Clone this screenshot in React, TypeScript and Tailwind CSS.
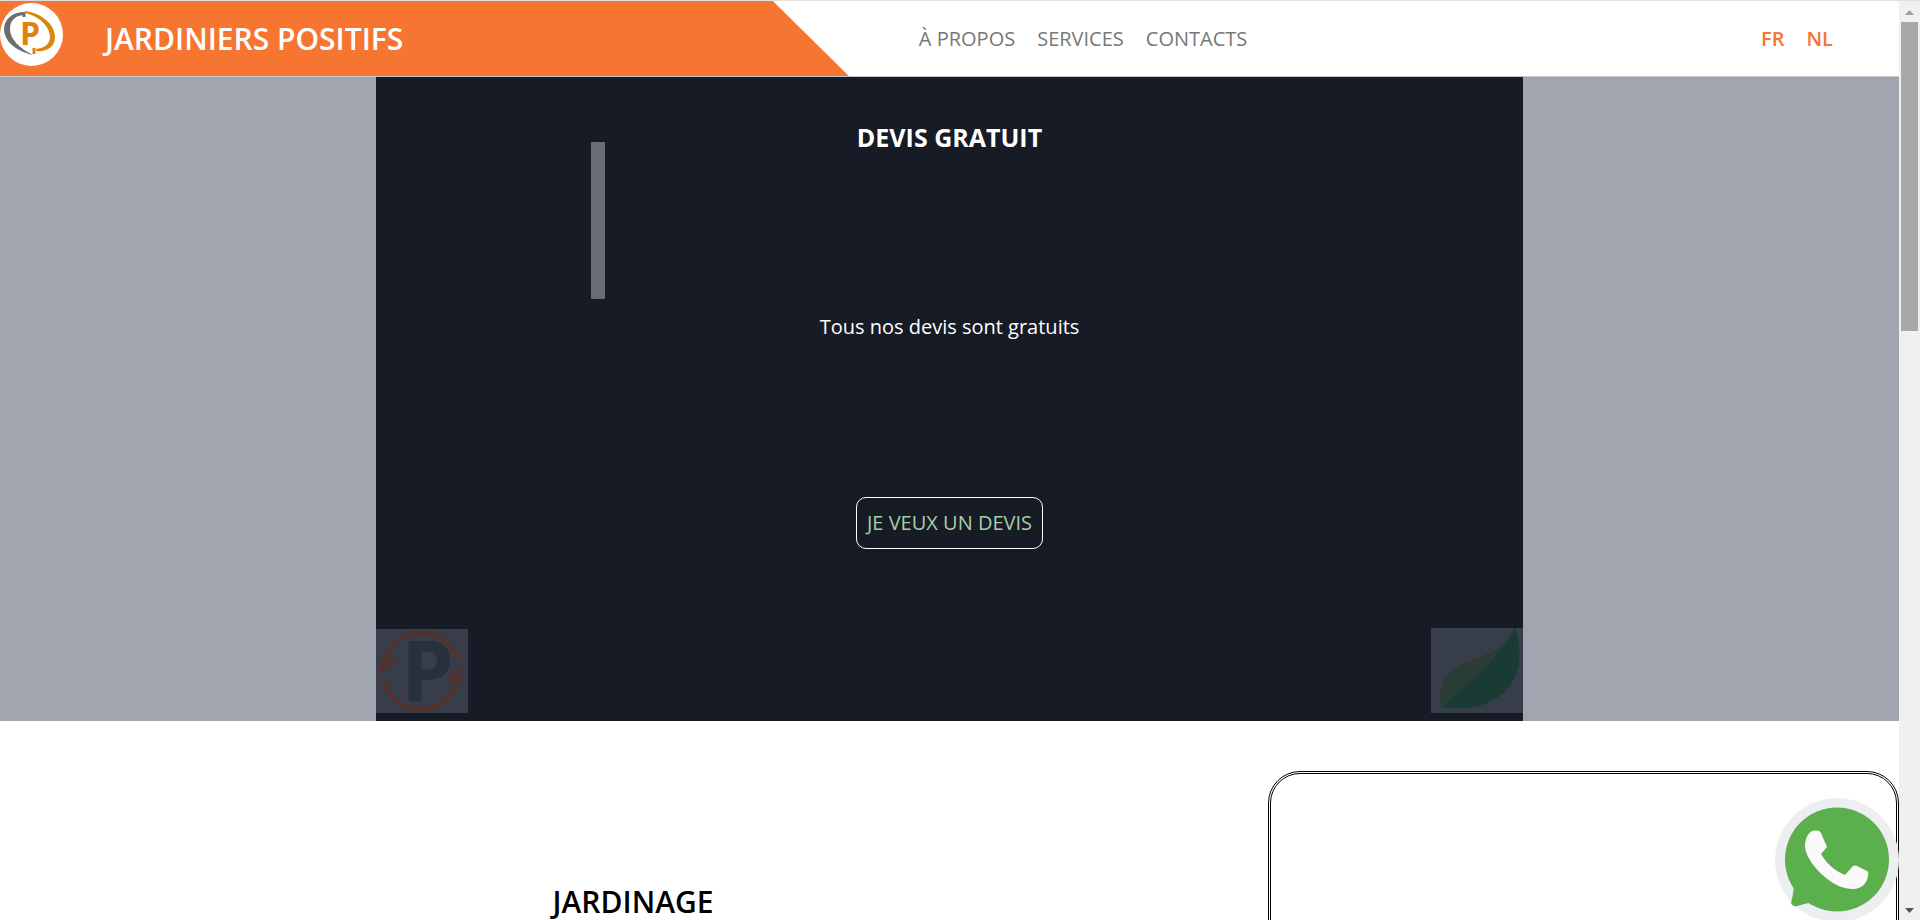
import React from 'react';

const navLinks = [
  { label: 'À PROPOS', href: '#a-propos' },
  { label: 'SERVICES', href: '#services' },
  { label: 'CONTACTS', href: '#contacts' },
];

function Logo() {
  return (
    <svg viewBox="0 0 63 63" className="size-[63px] shrink-0" role="img" aria-label="Logo">
      <circle cx="31.500" cy="31.500" r="31.500" fill="#fff" />
      <path d="M25 9C12 9 4 16 4 27C5 39 16 48 33 52C19 45 10 36 10 26C10 17 16 12 25 12Z" fill="#6d6d70" />
      <path d="M24 10V14" stroke="#6d6d70" strokeWidth="3" />
      <path d="M25 8C41 10 55 21 55 34C55 44 47 49 36 48V46C45 45 50 41 50 33C49 22 38 13 25 10Z" fill="#dc860f" />
      <path d="M34 45V51" stroke="#dc860f" strokeWidth="3" />
      <text x="20" y="42" fontFamily="'Open Sans', sans-serif" fontWeight="700" fontSize="32" fill="#e0820c">P</text>
    </svg>
  );
}

function Header() {
  return (
    <header className="flex h-[77px] items-stretch border-y border-t-[#e0e0e0] border-b-[#c4c6cb] bg-white">
      <div className="flex w-[44.7%] shrink-0 gap-[42px] bg-[#f67530] pt-0.5 [clip-path:polygon(0_0,calc(100%-76px)_0,100%_100%,0_100%)]">
        <Logo />
        <h1 className="-mt-0.5 flex items-center text-[30px] leading-10 font-semibold text-white">
          <a href="#accueil">JARDINIERS POSITIFS</a>
        </h1>
      </div>
      <nav className="flex flex-1 items-center justify-between pr-[66px] pl-[70px] text-xl">
        <ul className="flex gap-[22px] font-normal text-[#777]">
          {navLinks.map((link) => (
            <li key={link.href}>
              <a href={link.href}>{link.label}</a>
            </li>
          ))}
        </ul>
        <ul className="flex gap-[22px] font-semibold text-[#f67530]">
          <li><a href="#fr">FR</a></li>
          <li><a href="#nl">NL</a></li>
        </ul>
      </nav>
    </header>
  );
}

function RecycleMark() {
  return (
    <svg viewBox="0 0 92 84" className="h-[84px] w-[92px]" aria-hidden="true">
      <rect width="92" height="84" fill="#373e49" />
      <text x="25" y="72" fontFamily="'Open Sans', sans-serif" fontWeight="700" fontSize="84" fill="#28303c">P</text>
      <g fill="none" stroke="#50332e" strokeWidth="5">
        <path d="M7 36C14 14 28 4 45 4C63 4 75 14 82 30" />
        <path d="M7 53C15 72 28 80 45 80C67 80 81 64 83 43" />
      </g>
      <path d="M3 47L4 31L9 35L18 27L21 31Z" fill="#50332e" />
      <path d="M86 36L85 54L80 49L72 55L69 52Z" fill="#50332e" />
    </svg>
  );
}

function LeafMark() {
  return (
    <svg viewBox="0 0 92 85" className="h-[85px] w-[92px]" aria-hidden="true">
      <rect width="92" height="85" fill="#373e49" />
      <path d="M9 79C7 55 18 41 35 34C49 30 60 24 71 18L45 50Z" fill="#2b3c35" />
      <path d="M84 0C94 30 87 53 71 66C54 81 30 81 10 80C42 52 67 30 84 0Z" fill="#193b34" />
    </svg>
  );
}

function Hero() {
  return (
    <section className="flex h-[644px] justify-center bg-[#a1a5b0]">
      <div className="relative flex w-[60.4%] flex-col items-center bg-[#171b25] text-white">
        <h2 className="mt-10 text-[25px] leading-10 font-bold">DEVIS GRATUIT</h2>
        <p className="mt-[154px] text-xl leading-8">Tous nos devis sont gratuits</p>
        <button
          type="button"
          className="mt-[154px] h-[52px] rounded-[10px] border border-white px-2.5 text-xl text-[#a5cfa7]"
        >
          JE VEUX UN DEVIS
        </button>
        <div className="absolute top-[65px] left-[215px] h-[157px] w-[14px] bg-[#686c76]" />
        <div className="absolute bottom-2 left-0"><RecycleMark /></div>
        <div className="absolute right-0 bottom-2"><LeafMark /></div>
      </div>
    </section>
  );
}

function Services() {
  return (
    <section id="services" className="grid grid-cols-3 pt-[50px]">
      <div className="col-span-2 pt-[111px] text-center">
        <h2 className="text-[30px] leading-10 font-semibold text-black">JARDINAGE</h2>
      </div>
      <div className="ml-0.5 h-[400px] rounded-[32px] border-[3px] border-double border-black" />
    </section>
  );
}

function WhatsAppLink() {
  return (
    <a href="#whatsapp" aria-label="WhatsApp" className="absolute right-0 bottom-0 h-[122px] w-[124px]">
      <svg viewBox="0 0 124 122" className="h-full w-full" aria-hidden="true">
        <circle cx="62" cy="62" r="62" fill="#edeef1" />
        <circle cx="62" cy="61.500" r="52" fill="#5baf4c" />
        <path d="M19 88Q18 98 16 105Q18 109 22 108L41 103L25 80Z" fill="#5baf4c" />
        <path d="M37 33C41 32 45 32 46 35L52 49L46 56C52 66 60 73 70 77L78 68Q80 67 82 68L92 73Q94 74 93 77C93 84 87 91 78 91C68 91 60 87 51 80C40 71 31 59 30 49C30 42 32 36 37 33Z" fill="#fafafa" />
      </svg>
    </a>
  );
}

function ScrollTrack() {
  return (
    <div className="flex w-[21px] shrink-0 flex-col items-center justify-between border-t border-[#e0e0e0] bg-[#f0f0f0]" aria-hidden="true">
      <div className="flex w-full flex-col items-center">
        <svg viewBox="0 0 21 21" className="size-[21px]"><path d="M6 14L10.500 9L15 14Z" fill="#a0a0a0" /></svg>
        <div className="h-[309px] w-[17px] bg-[#a8a8a8]" />
      </div>
      <svg viewBox="0 0 21 21" className="size-[21px]"><path d="M6 9H15L10.500 14Z" fill="#555" /></svg>
    </div>
  );
}

export default function App() {
  return (
    <div className="flex h-screen overflow-hidden bg-white font-['Open_Sans',sans-serif]">
      <div className="relative min-w-0 flex-1 overflow-hidden">
        <Header />
        <main>
          <Hero />
          <Services />
        </main>
        <WhatsAppLink />
      </div>
      <ScrollTrack />
    </div>
  );
}
